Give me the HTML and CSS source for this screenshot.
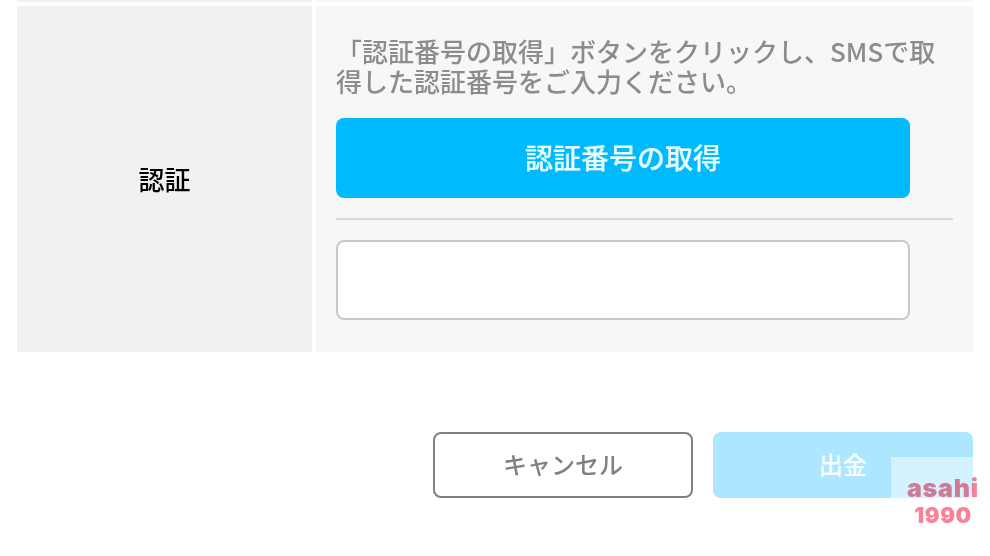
FILE: index.html
```html
<!DOCTYPE html>
<html lang="ja">
<head>
<meta charset="utf-8">
<title>認証</title>
<link rel="stylesheet" href="styles.css">
</head>
<body>
<main class="page">
  <div class="row previous"><div class="label"></div><div class="content"></div></div>
  <div class="row">
    <div class="label">認証</div>
    <div class="content">
      <p class="note">「認証番号の取得」ボタンをクリックし、SMSで取<br>得した認証番号をご入力ください。</p>
      <button class="get-code" type="button">認証番号の取得</button>
      <hr class="divider">
      <input class="code" type="text" aria-label="認証番号">
    </div>
  </div>
  <div class="actions">
    <button class="cancel" type="button">キャンセル</button>
    <button class="submit" type="button">出金</button>
  </div>
</main>
<div class="watermark"><span class="name">asahi</span><span class="year">1990</span></div>
</body>
</html>
```
FILE: styles.css
```css
* { box-sizing: border-box; }
body {
  margin: 0;
  height: 556px;
  overflow: hidden;
  position: relative;
  background: #fff;
  font-family: "Noto Sans CJK JP", sans-serif;
}
.page { padding: 0 17px; }
.row {
  display: grid;
  grid-template-columns: 295px 657px;
  column-gap: 4px;
  height: 346px;
}
.previous { height: 2px; margin-bottom: 4px; }
.label {
  display: flex;
  align-items: center;
  justify-content: center;
  background: #f1f1f1;
  color: #000;
  font-size: 26px;
  font-weight: 500;
  padding-bottom: 2px;
}
.content { background: #f7f7f7; padding: 0 20px; }
.previous .label, .previous .content { padding: 0; }
.note {
  margin: 0;
  padding-top: 30px;
  height: 112px;
  color: #8c8c8c;
  font-size: 26px;
  font-weight: 500;
  line-height: 30px;
  white-space: nowrap;
}
button { font-family: inherit; padding: 0; border: 0; border-radius: 8px; }
.get-code {
  display: block;
  width: 574px;
  height: 80px;
  padding-bottom: 2px;
  background: #00b9ff;
  color: #e8fdff;
  font-size: 28px;
  font-weight: 500;
  -webkit-text-stroke: .2px #e8fdff;
}
.divider { margin: 20px 0; border: 0; height: 2px; background: #d9d9d9; }
.code {
  display: block;
  width: 574px;
  height: 80px;
  border: 2px solid #c9c9c9;
  border-radius: 8px;
  background: #fff;
}
.actions {
  display: flex;
  justify-content: flex-end;
  gap: 20px;
  margin-top: 80px;
}
.actions button {
  width: 260px;
  height: 66px;
  padding-bottom: 4px;
  font-size: 24px;
  font-weight: 500;
}
.actions .cancel { background: #fff; border: 2px solid #808080; color: #808080; }
.actions .submit { background: #ace6ff; color: #f8feff; -webkit-text-stroke: .2px #f8feff; }
.watermark {
  position: absolute;
  left: 891px;
  top: 457px;
  width: 99px;
  height: 84px;
  background: rgba(255, 255, 255, .48);
  color: #fb8296;
  font-family: Inter, sans-serif;
  font-weight: 900;
  padding: 19px 0 0 5px;
  text-align: center;
}
.name, .year { display: block; height: 26px; line-height: 26px; mix-blend-mode: multiply; }
.name { font-size: 25px; letter-spacing: .8px; margin-top: -1px; }
.year { font-size: 22px; letter-spacing: .5px; margin-top: 1px; }
```
